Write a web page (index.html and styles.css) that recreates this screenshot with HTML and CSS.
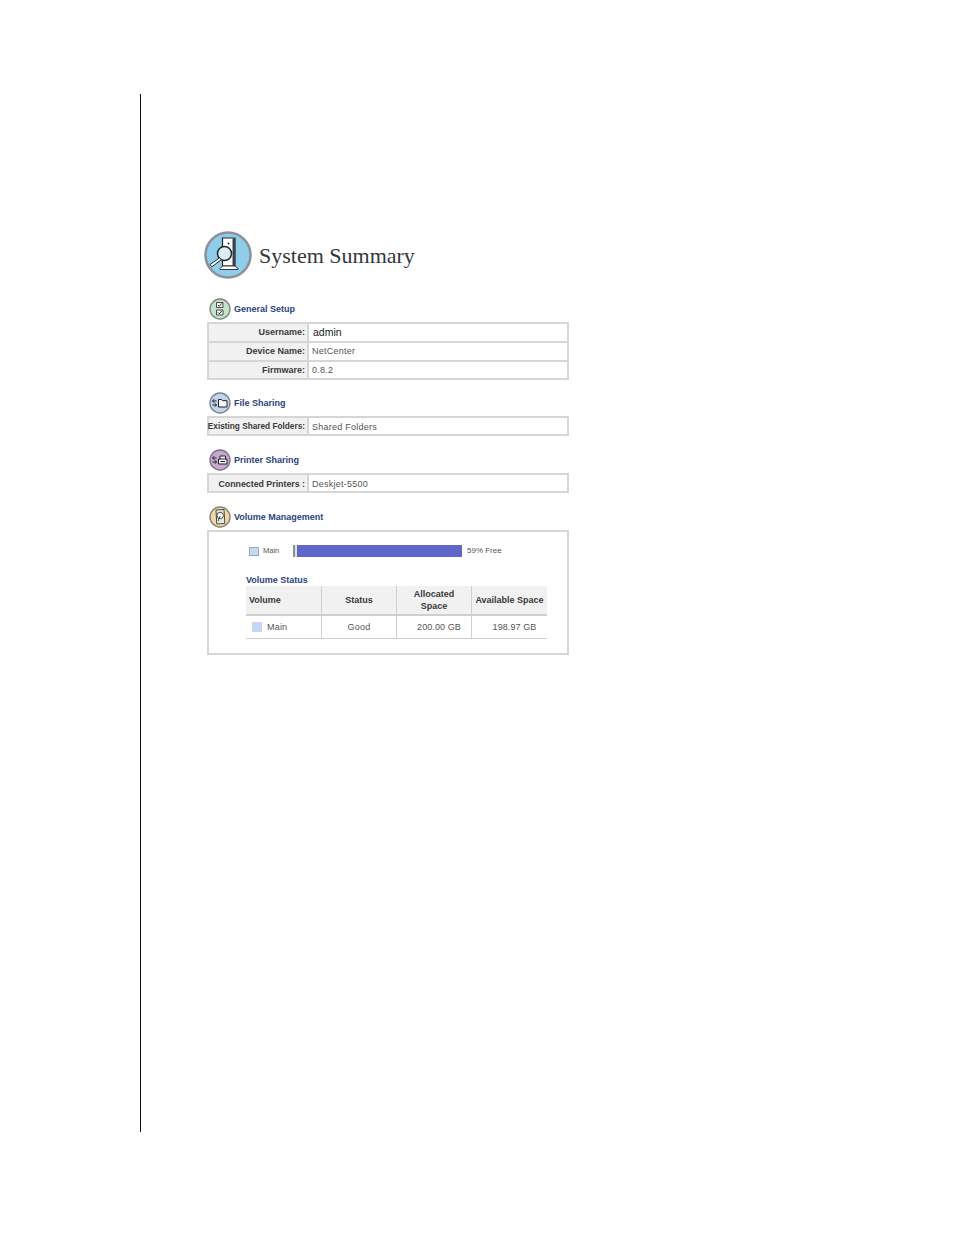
FILE: index.html
```html
<!DOCTYPE html>
<html lang="en">
<head>
<meta charset="utf-8">
<title>System Summary</title>
<link rel="stylesheet" href="styles.css">
</head>
<body>
<main class="page">
  <header class="title">
    <svg class="title-icon" viewBox="0 0 48 48" width="48" height="48">
      <circle cx="24" cy="24" r="22.5" fill="#8fcdea" stroke="#8c9298" stroke-width="2.6"/>
      <path d="M18.500 7h12.500v28H18.500z" fill="#fff" stroke="#23272c" stroke-width="1.200"/>
      <path d="M28.500 7.500h2.500v27.500h-2.500z" fill="#3a4046"/>
      <path d="M16 37.500l2.500-2.500h12.500l3 2.500v1H16z" fill="#fff" stroke="#23272c" stroke-width="0.900"/>
      <circle cx="24.500" cy="12.500" r="1" fill="#23272c"/>
      <circle cx="20.500" cy="22.500" r="7" fill="#d9eef7" stroke="#23272c" stroke-width="1.500"/>
      <path d="M15.500 27L6 33.500l1.800 2.300L17.500 28.500z" fill="#fff" stroke="#23272c" stroke-width="1"/>
    </svg>
    <h1>System Summary</h1>
  </header>

  <section class="setup">
    <h2 class="heading">
      <svg class="icon" viewBox="0 0 22 22" width="22" height="22">
        <circle cx="11" cy="11" r="10" fill="#c5e3c8" stroke="#7d8880" stroke-width="1.400"/>
        <path d="M7.500 4.500h6.500v5H7.500zM7.500 12h6.500v5H7.500z" fill="#f4f6f2" stroke="#3a3a3a" stroke-width="0.900"/>
        <path d="M9 7l1.300 1.300 2.500-3M9 14.500l1.300 1.300 2.500-3" fill="none" stroke="#222" stroke-width="0.900"/>
      </svg>
      General Setup
    </h2>
    <div class="info">
      <div class="row"><div class="label">Username:</div><div class="value strong">admin</div></div>
      <div class="row"><div class="label">Device Name:</div><div class="value">NetCenter</div></div>
      <div class="row"><div class="label">Firmware:</div><div class="value">0.8.2</div></div>
    </div>
  </section>

  <section>
    <h2 class="heading">
      <svg class="icon" viewBox="0 0 22 22" width="22" height="22">
        <circle cx="11" cy="11" r="10" fill="#c3d3ec" stroke="#7c8391" stroke-width="1.400"/>
        <path d="M9.500 15V7.500h3l1 1.200h4.500V15z" fill="#f5f7fb" stroke="#222" stroke-width="1"/>
        <path d="M3.500 9h4M5.200 7.200L3.500 9l1.700 1.800M7.500 13h-4M5.800 11.200L7.500 13l-1.700 1.800" fill="none" stroke="#222" stroke-width="1"/>
      </svg>
      File Sharing
    </h2>
    <div class="info single">
      <div class="row"><div class="label tight">Existing Shared Folders:</div><div class="value">Shared Folders</div></div>
    </div>
  </section>

  <section>
    <h2 class="heading">
      <svg class="icon" viewBox="0 0 22 22" width="22" height="22">
        <circle cx="11" cy="11" r="10" fill="#c8a9d2" stroke="#7d7286" stroke-width="1.400"/>
        <path d="M9.500 10h8.500v5H9.500zM11 10V7h5.500v3" fill="#f6f2f7" stroke="#222" stroke-width="1"/>
        <path d="M11.500 12.500h4.500" fill="none" stroke="#222" stroke-width="1"/>
        <path d="M3.500 9h4M5.200 7.200L3.500 9l1.700 1.800M7.500 13h-4M5.800 11.200L7.500 13l-1.700 1.800" fill="none" stroke="#222" stroke-width="1"/>
      </svg>
      Printer Sharing
    </h2>
    <div class="info single">
      <div class="row"><div class="label compact">Connected Printers :</div><div class="value">Deskjet-5500</div></div>
    </div>
  </section>

  <section>
    <h2 class="heading">
      <svg class="icon" viewBox="0 0 22 22" width="22" height="22">
        <circle cx="11" cy="11" r="10" fill="#eed9a6" stroke="#86816f" stroke-width="1.400"/>
        <path d="M7 4l8-.5.800 14-8 .5z" fill="#e6e6e2" stroke="#3a3a3a" stroke-width="0.900"/>
        <circle cx="11.200" cy="9.500" r="3.200" fill="#fff" stroke="#3a3a3a" stroke-width="0.900"/>
        <path d="M11.200 10l-2.200 5" stroke="#3a3a3a" stroke-width="0.900"/>
      </svg>
      Volume Management
    </h2>
    <div class="volume">
      <div class="usage">
        <span class="swatch"></span>
        <span class="usage-name">Main</span>
        <div class="bar"><div class="bar-used"></div></div>
        <span class="usage-free">59% Free</span>
      </div>
      <h3 class="status-title">Volume Status</h3>
      <div class="status">
        <div class="cell head left">Volume</div>
        <div class="cell head">Status</div>
        <div class="cell head">Allocated<br>Space</div>
        <div class="cell head">Available Space</div>
        <div class="cell body left"><span class="swatch large"></span>Main</div>
        <div class="cell body">Good</div>
        <div class="cell body nudged">200.00 GB</div>
        <div class="cell body nudged">198.97 GB</div>
      </div>
    </div>
  </section>
</main>
</body>
</html>
```

FILE: styles.css
```css
html, body {
  margin: 0;
  padding: 0;
  background: #fff;
}

body {
  font-family: "Liberation Sans", Arial, sans-serif;
  height: 1235px;
  overflow: hidden;
}

.page {
  box-sizing: border-box;
  width: 430px;
  height: 1038px;
  margin: 94px 0 0 140px;
  border-left: 1px solid #111;
  padding: 137px 0 0 66px;
}

.title {
  display: flex;
  align-items: center;
  gap: 7px;
  height: 48px;
  margin: 0 0 19px -3px;
}

.title-icon {
  flex: none;
}

.title h1 {
  margin: 2px 0 0;
  font-family: "Liberation Serif", "Times New Roman", serif;
  font-weight: 400;
  font-size: 22px;
  color: #33373a;
}

section {
  margin-bottom: 13px;
}

section.setup {
  margin-bottom: 12px;
}

.heading {
  display: flex;
  align-items: center;
  gap: 3px;
  height: 22px;
  margin: 0 0 2px 2px;
  font-size: 9px;
  font-weight: 700;
  color: #2b4280;
}

.icon {
  flex: none;
}

.info {
  width: 362px;
  box-sizing: border-box;
  border: 2px solid #d6d6d6;
}

.row {
  display: grid;
  grid-template-columns: 100px 1fr;
  height: 19px;
  border-bottom: 2px solid #d6d6d6;
  box-sizing: border-box;
}

.row:last-child {
  border-bottom: 0;
  height: 16px;
}

.label {
  display: flex;
  align-items: center;
  justify-content: flex-end;
  box-sizing: border-box;
  padding: 0 2px 1px 0;
  background: #f1f1f1;
  border-right: 2px solid #d6d6d6;
  font-size: 9px;
  font-weight: 700;
  color: #3a3a3a;
  white-space: nowrap;
}

.label.tight {
  font-size: 8.250px;
}

.label.compact {
  font-size: 8.800px;
}

.value {
  display: flex;
  align-items: center;
  box-sizing: border-box;
  padding: 0 0 1px 3px;
  font-size: 9px;
  letter-spacing: 0.25px;
  color: #555;
}

.row:last-child .label,
.row:last-child .value {
  padding-bottom: 0;
}

.single .row:last-child .label,
.single .row:last-child .value {
  padding-top: 1px;
}

.value.strong {
  padding-left: 4px;
  font-size: 10.500px;
  letter-spacing: 0;
  color: #222;
}

.volume {
  box-sizing: border-box;
  width: 362px;
  height: 125px;
  border: 2px solid #d6d6d6;
  padding: 13px 20px 0 37px;
}

.usage {
  display: flex;
  align-items: center;
  height: 12px;
  margin-left: 3px;
  font-size: 7.500px;
  color: #555;
}

.swatch {
  display: inline-block;
  flex: none;
  width: 8px;
  height: 7px;
  background: #c5d8f3;
  border: 1px solid #9aa9c2;
}

.usage-name {
  width: 30px;
  margin-left: 4px;
  padding-bottom: 1px;
}

.bar {
  width: 169px;
  height: 12px;
  box-sizing: border-box;
  border-left: 2px solid #8d8d8d;
  background: #5f66c9;
  padding-left: 2px;
}

.bar-used {
  width: 0;
  height: 12px;
  margin-left: -2px;
  border-left: 2px solid #e2e2da;
}

.usage-free {
  margin-left: 5px;
  padding-bottom: 1px;
  font-size: 8px;
}

.status-title {
  margin: 17px 0 0;
  height: 12px;
  font-size: 9px;
  line-height: 12px;
  font-weight: 700;
  color: #2b4280;
}

.status {
  display: grid;
  grid-template-columns: 76px 75px 75px 75px;
  grid-template-rows: 30px 23px;
  width: 301px;
  margin-top: 0;
}

.cell {
  display: flex;
  align-items: center;
  justify-content: center;
  text-align: center;
  box-sizing: border-box;
  border-right: 1px solid #cfcfcf;
  border-bottom: 1px solid #cfcfcf;
  font-size: 9px;
  line-height: 12px;
  white-space: nowrap;
}

.cell:nth-child(4n) {
  border-right: 0;
}

.cell.head {
  background: #f1f1f1;
  border-bottom-width: 2px;
  font-weight: 700;
  color: #3a3a3a;
}

.cell.body {
  color: #555;
  letter-spacing: 0.2px;
}

.cell.nudged {
  padding-left: 10px;
  letter-spacing: 0.1px;
}

.cell.left {
  justify-content: flex-start;
  padding-left: 3px;
}

.cell.body.left {
  padding-left: 6px;
}

.swatch.large {
  width: 8px;
  height: 8px;
  margin-right: 5px;
  border-color: #c5d8f3;
}
```
